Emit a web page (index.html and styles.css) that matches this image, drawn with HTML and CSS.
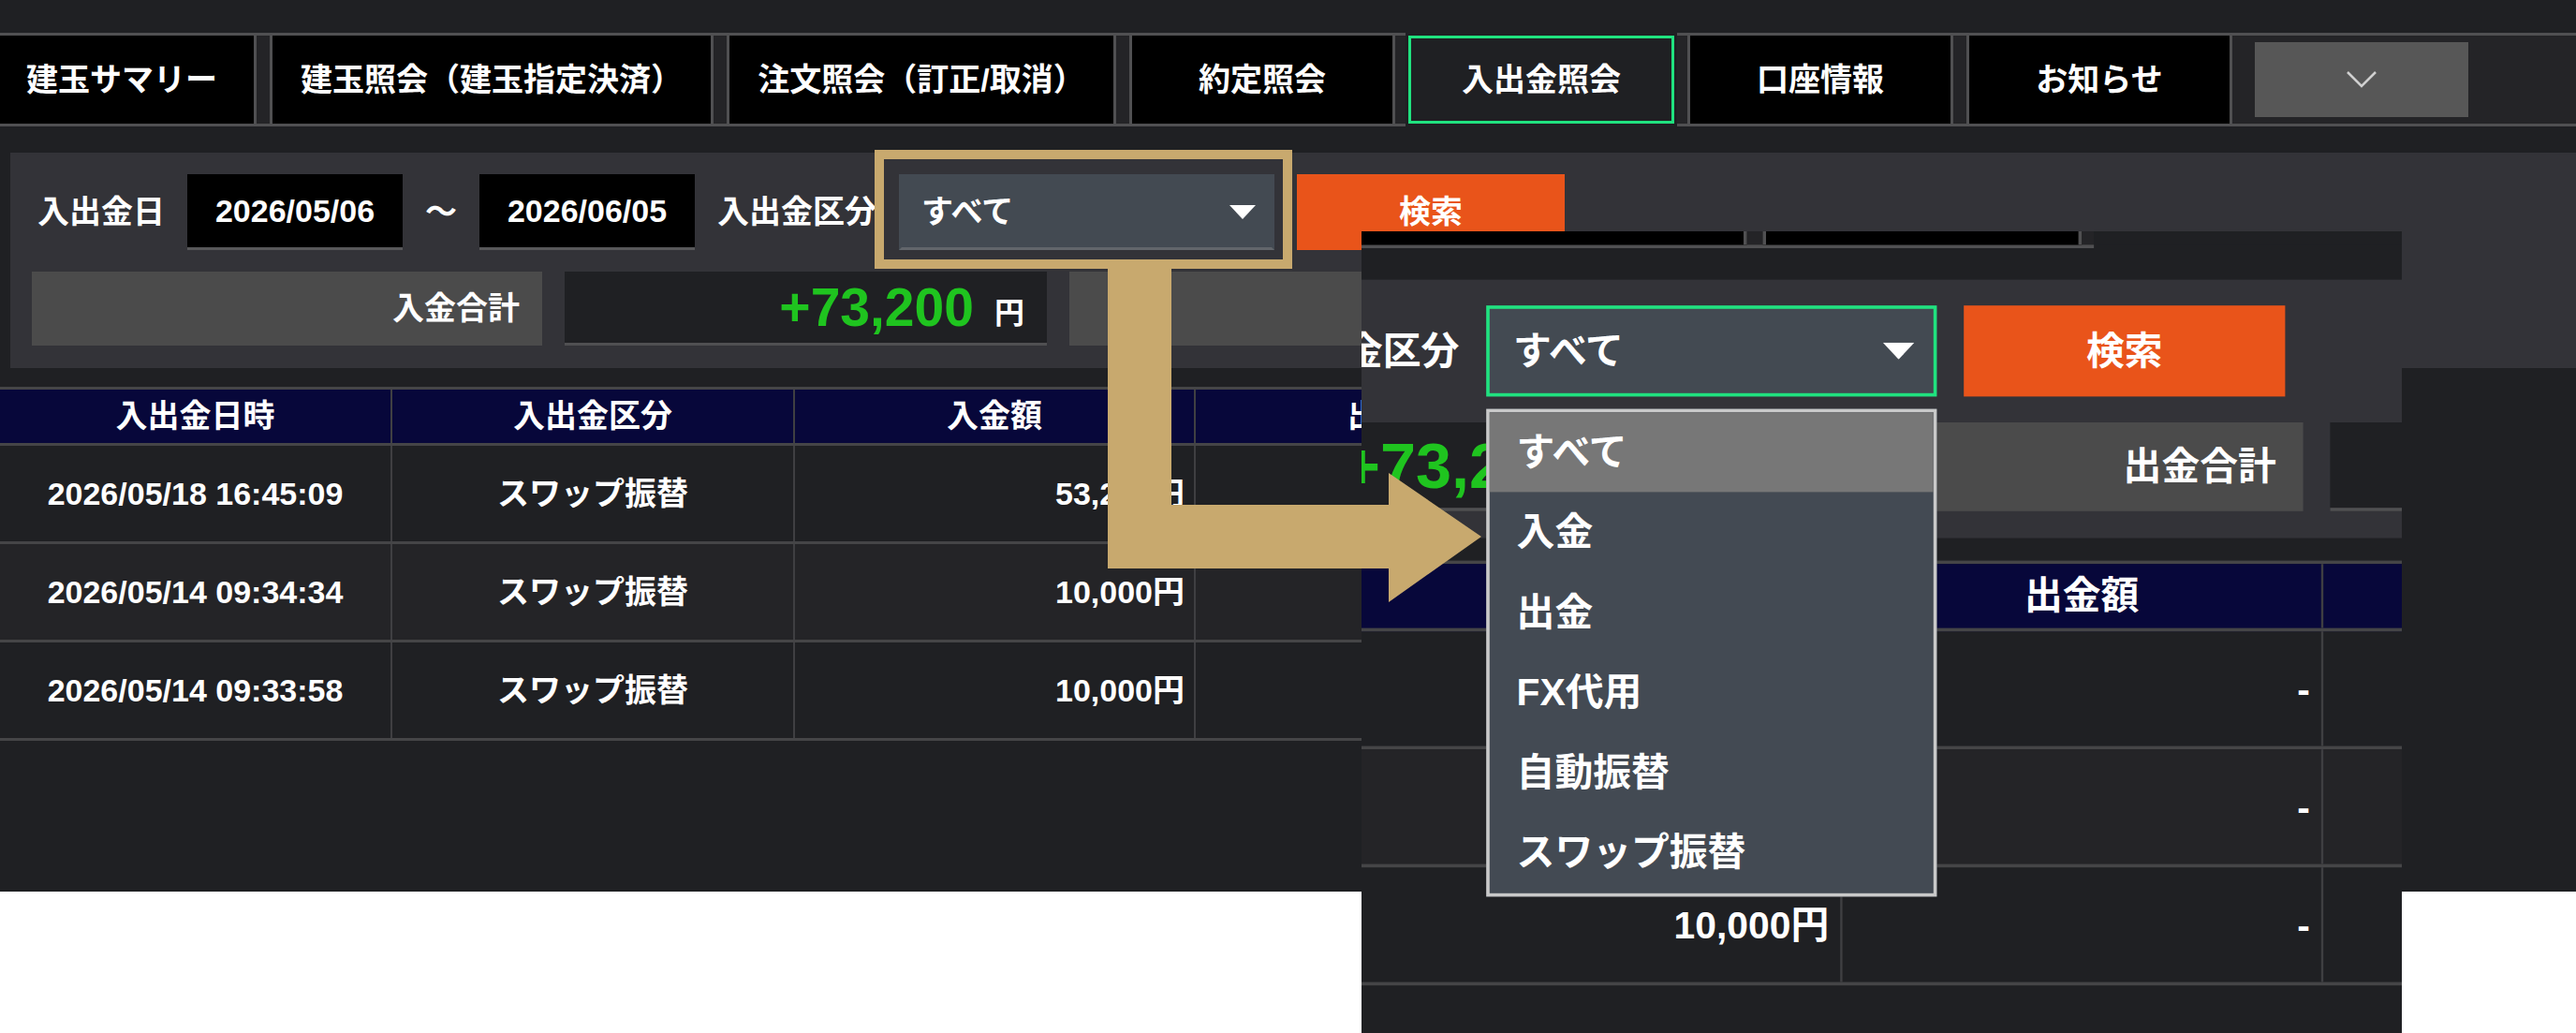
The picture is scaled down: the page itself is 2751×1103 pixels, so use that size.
FILE: index.html
```html
<!DOCTYPE html>
<html lang="ja">
<head>
    <meta charset="UTF-8">
    <meta name="viewport" content="width=device-width, initial-scale=1.0">
    <title>入出金照会</title>
    <link rel="stylesheet" href="styles.css">
</head>
<body>
    <div class="screen">
        <div class="page">
            <nav class="tabbar">
                <div class="tab tab-first">建玉サマリー</div>
                <div class="tab tab-wide">建玉照会（建玉指定決済）</div>
                <div class="tab tab-mid">注文照会（訂正/取消）</div>
                <div class="tab">約定照会</div>
                <div class="tab is-current">入出金照会</div>
                <div class="tab">口座情報</div>
                <div class="tab">お知らせ</div>
                <button class="btn-more" type="button">
                    <svg width="34" height="20" viewBox="0 0 34 20"><polyline points="2,2 17,17 32,2" fill="none" stroke="#d0d0d0" stroke-width="2.5"/></svg>
                </button>
            </nav>
            <form class="search-panel">
                <div class="search-row">
                    <span class="field-label">入出金日</span>
                    <div class="date-box">2026/05/06</div>
                    <span class="range-sep">～</span>
                    <div class="date-box">2026/06/05</div>
                    <span class="field-label">入出金区分</span>
                    <div class="select">
                        <span>すべて</span>
                        <svg class="select-arrow" width="28" height="15" viewBox="0 0 28 15"><polygon points="0,0 28,0 14,15" fill="#fff"/></svg>
                    </div>
                    <button class="btn-search" type="button">検索</button>
                </div>
                <div class="total-row">
                    <div class="total-label">入金合計</div>
                    <div class="total-value"><span class="total-amount"><span class="amount">+73,200</span><span class="unit">円</span></span></div>
                    <div class="total-label">出金合計</div>
                    <div class="total-value"></div>
                </div>
            </form>
            <div class="history">
                <div class="history-row history-head">
                    <div class="cell">入出金日時</div>
                    <div class="cell">入出金区分</div>
                    <div class="cell">入金額</div>
                    <div class="cell">出金額</div>
                    <div class="cell"></div>
                </div>
                <div class="history-row">
                    <div class="cell">2026/05/18 16:45:09</div>
                    <div class="cell">スワップ振替</div>
                    <div class="cell num">53,200円</div>
                    <div class="cell num">-</div>
                    <div class="cell"></div>
                </div>
                <div class="history-row is-alt">
                    <div class="cell">2026/05/14 09:34:34</div>
                    <div class="cell">スワップ振替</div>
                    <div class="cell num">10,000円</div>
                    <div class="cell num">-</div>
                    <div class="cell"></div>
                </div>
                <div class="history-row">
                    <div class="cell">2026/05/14 09:33:58</div>
                    <div class="cell">スワップ振替</div>
                    <div class="cell num">10,000円</div>
                    <div class="cell num">-</div>
                    <div class="cell"></div>
                </div>
            </div>
        </div>
    </div>

    <!-- enlarged view of the same screen with the select opened; parts outside the crop or under the list are left blank -->
    <div class="inset">
        <div class="page page-zoom">
            <nav class="tabbar">
                <div class="tab tab-first"></div>
                <div class="tab tab-wide"></div>
                <div class="tab tab-mid"></div>
                <div class="tab"></div>
                <div class="tab is-current"></div>
                <div class="tab"></div>
                <div class="tab"></div>
            </nav>
            <form class="search-panel">
                <div class="search-row">
                    <div class="search-spacer"></div>
                    <span class="field-label">入出金区分</span>
                    <div class="select is-focused">
                        <span>すべて</span>
                        <svg class="select-arrow" width="28" height="15" viewBox="0 0 28 15"><polygon points="0,0 28,0 14,15" fill="#fff"/></svg>
                        <ul class="dropdown">
                            <li class="dropdown-item is-active">すべて</li>
                            <li class="dropdown-item">入金</li>
                            <li class="dropdown-item">出金</li>
                            <li class="dropdown-item">FX代用</li>
                            <li class="dropdown-item">自動振替</li>
                            <li class="dropdown-item">スワップ振替</li>
                        </ul>
                    </div>
                    <button class="btn-search" type="button">検索</button>
                </div>
                <div class="total-row">
                    <div class="total-label"></div>
                    <div class="total-value"><span class="total-amount"><span class="amount">+73,200</span><span class="unit">円</span></span></div>
                    <div class="total-label">出金合計</div>
                    <div class="total-value"></div>
                </div>
            </form>
            <div class="history">
                <div class="history-row history-head">
                    <div class="cell"></div>
                    <div class="cell"></div>
                    <div class="cell"></div>
                    <div class="cell">出金額</div>
                    <div class="cell"></div>
                </div>
                <div class="history-row">
                    <div class="cell"></div>
                    <div class="cell"></div>
                    <div class="cell num"></div>
                    <div class="cell num">-</div>
                    <div class="cell"></div>
                </div>
                <div class="history-row is-alt">
                    <div class="cell"></div>
                    <div class="cell"></div>
                    <div class="cell num"></div>
                    <div class="cell num">-</div>
                    <div class="cell"></div>
                </div>
                <div class="history-row">
                    <div class="cell"></div>
                    <div class="cell"></div>
                    <div class="cell num">10,000円</div>
                    <div class="cell num">-</div>
                    <div class="cell"></div>
                </div>
            </div>
        </div>
    </div>

    <div class="callout"></div>
    <svg class="guide-arrow" width="400" height="357" viewBox="0 0 400 357">
        <polygon points="0,0 68,0 68,252 300,252 300,218 399,286 300,356 300,320 0,320" fill="#c8a96e"/>
    </svg>
</body>
</html>
```

FILE: styles.css
```css
body {
    margin: 0;
    width: 2751px;
    height: 1103px;
    overflow: hidden;
    position: relative;
    background: #fff;
    font-family: "Liberation Sans", "Noto Sans CJK JP", sans-serif;
}
.screen {
    height: 952px;
    overflow: hidden;
}
.page {
    width: 2751px;
    height: 952px;
    box-sizing: border-box;
    padding-top: 35px;
    background: #1f2023;
    color: #fff;
    font-size: 34px;
    font-weight: bold;
    line-height: 1.2;
}

/* tabs */
.tabbar {
    display: flex;
    align-items: center;
    gap: 14px;
    margin-left: -14px;
    height: 94px;
    background: #242427;
    border-top: 3px solid #505052;
    border-bottom: 3px solid #505052;
}
.tab {
    flex: none;
    width: 284px;
    height: 94px;
    box-sizing: border-box;
    border-left: 3px solid #505052;
    border-right: 3px solid #505052;
    background: #000;
    display: flex;
    align-items: center;
    justify-content: center;
    white-space: nowrap;
}
.tab-first {
    width: 288px;
}
.tab-wide {
    width: 474px;
}
.tab-mid {
    width: 416px;
}
.tab.is-current {
    width: 290px;
    height: 100px;
    margin: -3px -3px;
    border: 3px solid #1f2023;
    box-shadow: inset 0 0 0 3px #20e27f;
    background: #1f2023;
}
.page-zoom .tab.is-current {
    box-shadow: none;
}
.btn-more {
    flex: none;
    margin-left: 10px;
    width: 228px;
    height: 80px;
    padding: 0;
    border: 0;
    background: #575757;
    display: flex;
    align-items: center;
    justify-content: center;
}

/* search form */
.search-panel {
    margin: 28px 0 0 11px;
    height: 230px;
    box-sizing: border-box;
    padding: 23px;
    background: #333338;
    display: flex;
    flex-direction: column;
    gap: 23px;
}
.search-row {
    display: flex;
    align-items: center;
    gap: 24px;
    height: 81px;
    padding-left: 6px;
}
.search-spacer {
    flex: none;
    width: 702px;
}
.field-label {
    flex: none;
    white-space: nowrap;
}
.date-box {
    flex: none;
    width: 230px;
    height: 81px;
    box-sizing: border-box;
    background: #000;
    border-bottom: 3px solid #58585a;
    display: flex;
    align-items: center;
    justify-content: center;
}
.range-sep {
    flex: none;
    width: 34px;
    text-align: center;
}
.select {
    flex: none;
    position: relative;
    width: 401px;
    height: 81px;
    box-sizing: border-box;
    padding: 0 17px 0 21px;
    background: #434a52;
    border: 3px solid #434a52;
    border-bottom-color: #62666b;
    display: flex;
    align-items: center;
    justify-content: space-between;
}
.select.is-focused {
    border-color: #20e27f;
}
.dropdown {
    position: absolute;
    left: -3px;
    top: 89px;
    width: 401px;
    box-sizing: border-box;
    margin: 0;
    padding: 0;
    list-style: none;
    border: 3px solid #c9c9c9;
    background: #434a53;
}
.dropdown-item {
    height: 71.25px;
    display: flex;
    align-items: center;
    padding-left: 24px;
}
.dropdown-item.is-active {
    background: #777;
}
.btn-search {
    flex: none;
    width: 286px;
    height: 81px;
    padding: 0;
    border: 0;
    background: #e9541a;
    color: #fff;
    font: inherit;
}
.total-row {
    display: flex;
    gap: 24px;
    height: 79px;
}
.total-label {
    flex: none;
    width: 545px;
    box-sizing: border-box;
    padding-right: 24px;
    background: #4b4b4b;
    display: flex;
    align-items: center;
    justify-content: flex-end;
}
.total-value {
    flex: none;
    width: 515px;
    box-sizing: border-box;
    padding-right: 24px;
    background: #1f2023;
    border-bottom: 3px solid #505052;
    display: flex;
    align-items: center;
    justify-content: flex-end;
}
.amount {
    font-size: 57px;
    line-height: 1;
    color: #1fc41f;
}
.unit {
    font-size: 32px;
    margin-left: 22px;
    vertical-align: 3px;
}

/* history table */
.history {
    margin-top: 20px;
    width: 2135px;
    border-top: 3px solid #454547;
}
.history-row {
    display: grid;
    grid-template-columns: 419px 430px 428px 428px 430px;
    height: 105px;
    box-sizing: border-box;
    border-bottom: 3px solid #454547;
}
.history-head {
    height: 60px;
    background: #07073a;
}
.history-row.is-alt {
    background: #242427;
}
.cell {
    display: flex;
    align-items: center;
    justify-content: center;
    padding: 0 14px;
    border-right: 2px solid #3f3f42;
    white-space: nowrap;
}
.cell.num {
    justify-content: flex-end;
    padding-right: 10px;
}

/* enlarged view and guide marks */
.inset {
    position: absolute;
    left: 1454px;
    top: 247px;
    width: 1111px;
    height: 856px;
    overflow: hidden;
}
.page-zoom {
    transform-origin: 0 0;
    transform: scale(1.2) translate(-849px, -120px);
}
.callout {
    position: absolute;
    left: 934px;
    top: 160px;
    width: 446px;
    height: 127px;
    box-sizing: border-box;
    border: 10px solid #c8a96e;
}
.guide-arrow {
    position: absolute;
    left: 1183px;
    top: 287px;
}
```
